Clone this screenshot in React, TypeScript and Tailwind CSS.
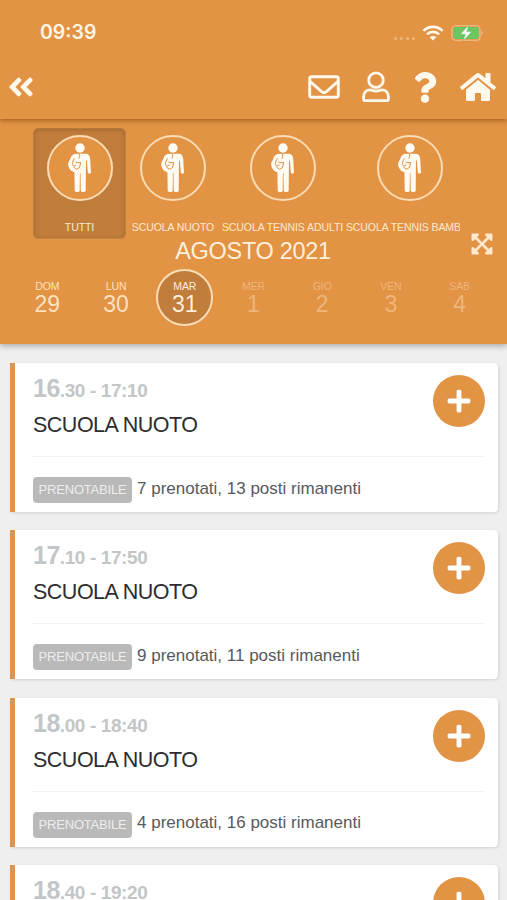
import {
  FaAngleDoubleLeft,
  FaExpandArrowsAlt,
  FaHome,
  FaPlus,
  FaQuestion,
} from 'react-icons/fa';

const CATEGORIES = [
  { label: 'TUTTI', width: 'w-[93px]', active: true },
  { label: 'SCUOLA NUOTO', width: 'w-[94px]', active: false },
  { label: 'SCUOLA TENNIS ADULTI', width: 'w-[125px]', active: false },
  { label: 'SCUOLA TENNIS BAMBINI', width: 'w-[130px]', active: false },
];

const DAYS = [
  { name: 'DOM', num: 29, state: 'open' },
  { name: 'LUN', num: 30, state: 'open' },
  { name: 'MAR', num: 31, state: 'selected' },
  { name: 'MER', num: 1, state: 'disabled' },
  { name: 'GIO', num: 2, state: 'disabled' },
  { name: 'VEN', num: 3, state: 'disabled' },
  { name: 'SAB', num: 4, state: 'disabled' },
];

const SLOTS = [
  { hour: '16', rest: '.30 - 17:10', title: 'SCUOLA NUOTO', info: '7 prenotati, 13 posti rimanenti' },
  { hour: '17', rest: '.10 - 17:50', title: 'SCUOLA NUOTO', info: '9 prenotati, 11 posti rimanenti' },
  { hour: '18', rest: '.00 - 18:40', title: 'SCUOLA NUOTO', info: '4 prenotati, 16 posti rimanenti' },
  { hour: '18', rest: '.40 - 19:20', title: 'SCUOLA NUOTO', info: '6 prenotati, 14 posti rimanenti' },
];

function WifiIcon() {
  return (
    <svg viewBox="0 0 22 16" className="w-[22px] h-4" fill="none" stroke="#fffaf0" strokeWidth="2.6">
      <path d="M1.4 5.8a13.6 13.6 0 0 1 19.2 0" />
      <path d="M4.9 9.4a8.6 8.6 0 0 1 12.2 0" />
      <path d="M11 15.6 7.7 12.3a4.7 4.7 0 0 1 6.6 0z" fill="#fffaf0" stroke="none" />
    </svg>
  );
}

function BatteryIcon() {
  return (
    <svg viewBox="0 0 33 18" className="w-[33px] h-[18px]">
      <rect x="1" y="1.8" width="28" height="14.4" rx="3.5" fill="none" stroke="#f3c391" strokeWidth="1.1" />
      <rect x="2.2" y="3" width="25.6" height="12" rx="2.4" fill="#6cc664" />
      <path d="M30.5 6.8c1.6.5 1.6 3.9 0 4.4z" fill="#f3c391" />
      <path d="M17.8 1 9.4 10.2h4.9L12.2 17l8.5-9.4h-4.9z" fill="#fff" stroke="#6cc664" strokeWidth=".6" />
    </svg>
  );
}

function MailIcon() {
  return (
    <svg viewBox="0 0 32 24" className="w-8 h-6" fill="none" stroke="currentColor" strokeWidth="2.9" strokeLinejoin="round">
      <rect x="1.7" y="1.7" width="28.6" height="20.6" rx="2" />
      <path d="M2 6.4l11.6 10.3c1.7 1.4 3.1 1.4 4.8 0L30 6.4" />
    </svg>
  );
}

function UserIcon() {
  return (
    <svg viewBox="0 0 28 32" className="w-7 h-8" fill="none" stroke="currentColor" strokeWidth="2.8" strokeLinejoin="round">
      <circle cx="14" cy="9.2" r="7.3" />
      <path d="M7.6 18.8c2.2 0 3.3 1.3 6.4 1.3s4.200-1.300 6.400-1.300c3.800 0 6 3.400 6 7.500v1.700c0 1-.8 1.700-1.800 1.700H3.400c-1 0-1.800-.7-1.800-1.700v-1.700c0-4.100 2.200-7.500 6-7.500z" />
    </svg>
  );
}

function PersonIcon() {
  return (
    <svg viewBox="-13 -26 26 52" className="w-[26px] h-[52px]">
      <g fill="#fffaf2">
        <circle cx="0" cy="-20" r="4.7" />
        <path d="M-3-14.200H5c3.600 0 5 2 5.200 5.200L11 4.500c0 1.500-3 1.500-3.200 0L6.800-7.500H6L5.700 22.800c0 1.700-4.800 1.700-4.900 0L.5 5h-.6l-.2 17.800c-.1 1.700-4.900 1.700-5 0L-5.600 4.200C-9.500 3.600-12-1-11.900-4c.2-2.400 1.800-3.400 2.500-5.900.7-2.700 2.700-4.400 6.400-4.300z" />
      </g>
      <g fill="none" stroke="#dd8f43" strokeWidth="1" strokeLinejoin="round">
        <path d="M-.6-14.400c.7 2.200.1 3.300-.5 5.200M-5.600-9.600c-2.500 4-2.600 6.800-.5 7.800l2.600-1.300" />
        <path d="M-4.600-6.200l1.500.9 3.800-.2-1.200 5-3 1.800-3-2.300" />
      </g>
    </svg>
  );
}

function DayCell({ name, num, state }: { name: string; num: number; state: string }) {
  const tone =
    state === 'selected'
      ? 'bg-[#c07d3b] border-[#fbdcb4] text-[#ffeed9]'
      : state === 'open'
        ? 'border-transparent text-[#ffe1bf]'
        : 'border-transparent text-[#efb67c]';
  return (
    <div className="flex-1 flex justify-center">
      <div className={`w-[57px] h-[57px] rounded-full border-2 flex flex-col items-center pt-[10px] ${tone}`}>
        <span className="text-[10.5px] leading-[11px] tracking-[-0.1px]">{name}</span>
        <span className="text-[23px] leading-[24px]">{num}</span>
      </div>
    </div>
  );
}

function SlotCard({ hour, rest, title, info }: { hour: string; rest: string; title: string; info: string }) {
  return (
    <div className="h-[149px] shrink-0 bg-white border-l-[5px] border-[#dc9450] rounded-r-[4px] shadow-[1px_1px_3px_rgba(0,0,0,0.12)] pl-[18px] pr-[14px]">
      <div className="h-[94px] flex justify-between border-b border-[#f1f1f1]">
        <div className="pt-[11px] whitespace-nowrap">
          <p className="font-bold text-[#c3c6c7] leading-[28px] text-[19px] tracking-[-0.4px]">
            <span className="text-[25px] tracking-[-0.5px]">{hour}</span>
            {rest}
          </p>
          <h2 className="mt-[7px] text-[21.5px] leading-[26px] tracking-[-0.5px] text-[#2d2d2f]">{title}</h2>
        </div>
        <button className="mt-[12px] -mr-px w-[52px] h-[52px] rounded-full bg-[#e29344] text-white flex items-center justify-center">
          <FaPlus className="w-[26px] h-[26px]" />
        </button>
      </div>
      <div className="flex items-center pt-[20px] whitespace-nowrap">
        <span className="w-[99px] h-[26px] rounded-[4px] bg-[#b9b9b9] text-[#ededed] text-[13px] leading-[26px] text-center tracking-[-0.2px]">
          PRENOTABILE
        </span>
        <span className="ml-[5px] -mt-[3px] text-[17px] leading-[22px] text-[#58595c]">{info}</span>
      </div>
    </div>
  );
}

export default function App() {
  return (
    <div className="w-full h-[900px] overflow-hidden flex flex-col bg-[#efefef] font-['Liberation_Sans',Arial,sans-serif]">
      <header className="relative z-10 h-[119px] shrink-0 bg-[#e29344] shadow-[0_2px_4px_rgba(120,60,10,0.5)]">
        <div className="h-[58px] pt-[8px] pl-[40px] pr-[23px] flex items-center justify-between">
          <span className="font-['Inter',sans-serif] font-semibold text-[19.5px] text-[#fff5e5]">09:39</span>
          <div className="flex items-center">
            <div className="flex gap-[3px] mr-[7px] mt-[10px]">
              {[0, 1, 2, 3].map(i => <span key={i} className="w-[3px] h-[3px] rounded-full bg-[#efb67b]" />)}
            </div>
            <WifiIcon />
            <div className="ml-[7px]"><BatteryIcon /></div>
          </div>
        </div>
        <div className="h-[58px] pl-[7px] pr-[11px] flex items-center justify-between text-[#fff8ec]">
          <FaAngleDoubleLeft className="w-[28px] h-[30px] -mt-px" />
          <div className="flex items-center">
            <MailIcon />
            <div className="ml-[22px] mr-[22px]"><UserIcon /></div>
            <FaQuestion className="w-[26px] h-[31px] mr-[22px]" />
            <FaHome className="w-[36px] h-[32px]" />
          </div>
        </div>
      </header>

      <section className="h-[225px] shrink-0 bg-[#e29344] shadow-[0_2px_6px_rgba(0,0,0,0.3)]">
        {/* Category scroller */}
        <div className="pt-[9px] ml-[33px] w-[427px] flex overflow-hidden">
          {CATEGORIES.map(c => (
            <div
              key={c.label}
              className={`${c.width} h-[111px] shrink-0 flex flex-col items-center pt-[7px] rounded-[6px] ${
                c.active ? 'bg-[#c07d3b] shadow-[inset_0_1px_5px_rgba(110,60,15,0.45),inset_0_0_0_1px_#cd904f]' : ''
              }`}
            >
              <div className="w-[66px] h-[66px] shrink-0 rounded-full border-2 border-[#fbdcb4] bg-[#e29344] flex items-center justify-center">
                <PersonIcon />
              </div>
              <span className="mt-[20px] text-[10.5px] leading-[12px] tracking-[-0.08px] text-[#ffe9cf] whitespace-nowrap">
                {c.label}
              </span>
            </div>
          ))}
        </div>

        <div className="h-[30px] pl-[35px] pr-[14px] flex items-center">
          <h1 className="flex-1 -mt-[6px] text-center text-[23.5px] leading-[24px] tracking-[-0.3px] text-[#fff0dc]">AGOSTO 2021</h1>
          <FaExpandArrowsAlt className="w-[22px] h-[24px] -mt-[20px] text-[#ffe9cf]" />
        </div>

        <div className="px-[13px] flex">
          {DAYS.map(d => <DayCell key={d.name} {...d} />)}
        </div>
      </section>

      <main className="pt-[19px] pl-[10px] pr-[9px] flex flex-col gap-[18.3px]">
        {SLOTS.map(s => <SlotCard key={s.hour + s.rest} {...s} />)}
      </main>
    </div>
  );
}
